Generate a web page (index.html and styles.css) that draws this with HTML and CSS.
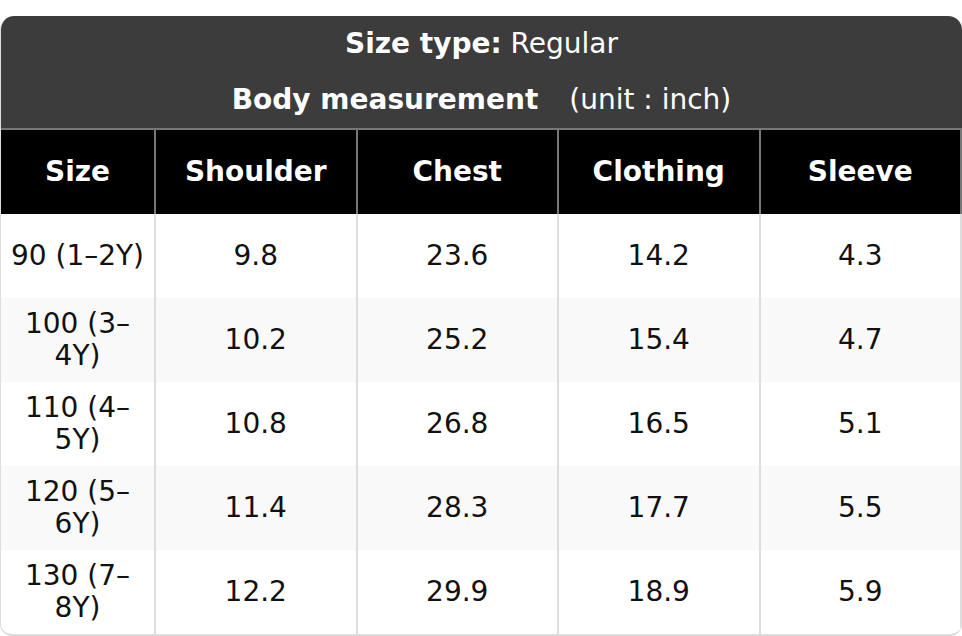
FILE: index.html
```html
<!DOCTYPE html>
<html lang="en">
<head>
<meta charset="utf-8">
<title>Size chart</title>
<link rel="stylesheet" href="styles.css">
</head>
<body>
<div class="sheet">
  <div class="title">
    <div class="title-line"><strong>Size type:</strong> Regular</div>
    <div class="title-line"><strong>Body measurement</strong><span class="unit">(unit : inch)</span></div>
  </div>
  <table class="chart">
    <colgroup>
      <col class="c-size">
      <col><col><col><col>
    </colgroup>
    <thead>
      <tr><th>Size</th><th>Shoulder</th><th>Chest</th><th>Clothing</th><th>Sleeve</th></tr>
    </thead>
    <tbody>
      <tr><td>90 (1–2Y)</td><td>9.8</td><td>23.6</td><td>14.2</td><td>4.3</td></tr>
      <tr><td>100 (3–4Y)</td><td>10.2</td><td>25.2</td><td>15.4</td><td>4.7</td></tr>
      <tr><td>110 (4–5Y)</td><td>10.8</td><td>26.8</td><td>16.5</td><td>5.1</td></tr>
      <tr><td>120 (5–6Y)</td><td>11.4</td><td>28.3</td><td>17.7</td><td>5.5</td></tr>
      <tr><td>130 (7–8Y)</td><td>12.2</td><td>29.9</td><td>18.9</td><td>5.9</td></tr>
    </tbody>
  </table>
</div>
</body>
</html>
```
FILE: styles.css
```css
html, body {
  margin: 0;
  padding: 0;
  background: #ffffff;
}
body {
  padding-top: 16px;
  font-family: "DejaVu Sans", "Liberation Sans", sans-serif;
  font-size: 28px;
  color: #111111;
}
.sheet {
  width: 962px;
  box-sizing: border-box;
  border-left: 1px solid #dddddd;
  border-bottom: 2px solid #dddddd;
  border-radius: 14px 14px 12px 12px;
  overflow: hidden;
}
.title {
  background: #3c3c3c;
  color: #ffffff;
  text-align: center;
  border-bottom: 2px solid #777777;
}
.title-line {
  height: 56px;
  line-height: 56px;
}
.title strong {
  font-weight: bold;
}
.unit {
  margin-left: 31px;
}
.chart {
  width: 100%;
  border-collapse: separate;
  border-spacing: 0;
  table-layout: fixed;
}
.c-size {
  width: 155px;
}
.chart th,
.chart td {
  height: 84px;
  box-sizing: border-box;
  padding: 0 6px;
  text-align: center;
  vertical-align: middle;
  line-height: 32px;
}
.chart th {
  background: #000000;
  color: #ffffff;
  font-weight: bold;
  border-right: 2px solid #777777;
}
.chart td {
  border-right: 2px solid #dddddd;
  color: #111111;
}
.chart tbody tr:nth-child(even) td {
  background: #f9f9f9;
}
```
